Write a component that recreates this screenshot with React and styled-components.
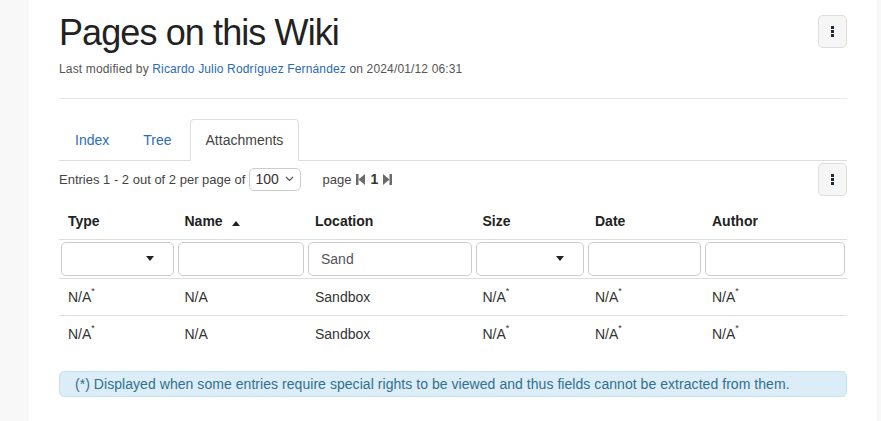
import React from 'react'
import styled, { createGlobalStyle } from 'styled-components'

const GlobalStyle = createGlobalStyle`
  body {
    margin: 0;
    background: #f8f8f8;
    font-family: 'Liberation Sans', Arial, sans-serif;
    color: #333;
  }
`

const Page = styled.div`
  display: flex;
  min-height: 421px;
`
const Main = styled.main`
  margin-left: 29px;
  width: 848px;
  box-sizing: border-box;
  padding: 0 30px;
  background: #fff;
`
const TitleRow = styled.div`
  display: flex;
  justify-content: space-between;
  align-items: flex-start;
`
const Title = styled.h1`
  margin: 13px 0 0;
  font-size: 36px;
  font-weight: normal;
  line-height: 1.1;
  letter-spacing: -0.9px;
  color: #222;
`
const KebabButton = styled.button`
  display: flex;
  flex-direction: column;
  align-items: center;
  justify-content: center;
  gap: 1px;
  width: 29px;
  height: 33px;
  margin-top: ${(p) => p.$top || 0}px;
  padding: 0;
  background: #f6f6f6;
  border: 1px solid #ddd;
  border-radius: 5px;
  flex-shrink: 0;
`
const Dot = styled.span`
  width: 3px;
  height: 3px;
  background: #1f2a38;
`
const Meta = styled.div`
  margin-top: 7px;
  font-size: 12px;
  line-height: 18px;
  letter-spacing: 0.15px;
  color: #555;
`
const Link = styled.a`
  color: #2a6ab4;
  text-decoration: none;
`
const Rule = styled.hr`
  margin: 20px 0;
  border: 0;
  border-top: 1px solid #e9e9e9;
`
const Tabs = styled.ul`
  display: flex;
  margin: 0;
  padding: 0;
  list-style: none;
  border-bottom: 1px solid #ddd;
`
const Tab = styled.li`
  margin: 0 2px -1px 0;
  padding: 10px 15px;
  font-size: 14px;
  line-height: 20px;
  border: 1px solid ${(p) => (p.$active ? '#ddd' : 'transparent')};
  border-bottom-color: transparent;
  border-radius: 4px 4px 0 0;
  background: ${(p) => (p.$active ? '#fff' : 'transparent')};
  color: ${(p) => (p.$active ? '#444' : '#2d6db3')};
`
const Toolbar = styled.div`
  display: flex;
  align-items: center;
  margin-top: 2px;
  font-size: 13px;
  color: #444;
`
const PerPage = styled.div`
  display: flex;
  align-items: center;
  justify-content: space-between;
  box-sizing: border-box;
  width: 52px;
  height: 23px;
  margin-left: 4px;
  padding: 0 6px 0 5px;
  font-size: 14px;
  color: #333;
  border: 1px solid #ccc;
  border-radius: 5px;
`
const Pager = styled.div`
  display: flex;
  align-items: center;
  gap: 5px;
  margin-left: 21px;
  flex: 1;
`
const PageNum = styled.b`
  font-size: 14px;
  color: #333;
`
const Table = styled.table`
  width: 788px;
  margin-top: 5px;
  border-collapse: collapse;
  table-layout: fixed;
  font-size: 14px;
`
const Th = styled.th`
  padding: 10px 8px 8px 9px;
  line-height: 20px;
  text-align: left;
  font-weight: bold;
  color: #222;
  border-bottom: 1px solid #ddd;
`
const FilterCell = styled.td`
  padding: 2px;
  border-bottom: 1px solid #ddd;
`
const FilterBox = styled.div`
  display: flex;
  align-items: center;
  justify-content: ${(p) => (p.$select ? 'flex-end' : 'flex-start')};
  box-sizing: border-box;
  height: 34px;
  padding: ${(p) => (p.$select ? '0 19px 0 12px' : '0 12px')};
  font-size: 14px;
  color: #555;
  border: 1px solid #ccc;
  border-radius: 5px;
`
const Td = styled.td`
  padding: 8px 8px 8px 9px;
  line-height: 20px;
  color: #333;
  border-bottom: ${(p) => (p.$last ? 'none' : '1px solid #ddd')};
`
const Star = styled.sup`
  position: relative;
  top: -2px;
  font-size: 9px;
  line-height: 0;
`
const Notice = styled.div`
  margin-top: 19px;
  padding: 2px 15px;
  font-size: 14px;
  line-height: 20px;
  letter-spacing: 0.05px;
  color: #31708f;
  background: #dcedf8;
  border: 1px solid #bfe3f1;
  border-radius: 5px;
`

const Caret = ({ up, ml = 0 }) => (
  <svg width="8" height="5" viewBox="0 0 8 5" style={{ marginLeft: ml }}>
    <path d={up ? 'M0 5 L4 0 L8 5 Z' : 'M0 0 L8 0 L4 5 Z'} fill="#222" />
  </svg>
)

const StepIcon = ({ next }) => (
  <svg width="9" height="11" viewBox="0 0 9 11">
    {next ? (
      <>
        <path d="M0 0 L6.5 5.5 L0 11 Z" fill="#6b6b6b" />
        <rect x="6.5" y="0" width="2.5" height="11" fill="#6b6b6b" />
      </>
    ) : (
      <>
        <rect x="0" y="0" width="2.5" height="11" fill="#6b6b6b" />
        <path d="M9 0 L2.5 5.5 L9 11 Z" fill="#6b6b6b" />
      </>
    )}
  </svg>
)

const Kebab = ({ top }) => (
  <KebabButton $top={top}>
    <Dot />
    <Dot />
    <Dot />
  </KebabButton>
)

const NA = () => (
  <>
    N/A<Star>*</Star>
  </>
)

const widths = [116.5, 130.5, 167.5, 112.5, 117, 144]
const rows = [1, 2]

export default function App() {
  return (
    <>
      <GlobalStyle />
      <Page>
        <Main>
          <TitleRow>
            <Title>Pages on this Wiki</Title>
            <Kebab top={15} />
          </TitleRow>
          <Meta>
            Last modified by <Link href="#">Ricardo Julio Rodríguez Fernández</Link> on
            2024/01/12 06:31
          </Meta>
          <Rule />
          <Tabs>
            <Tab>Index</Tab>
            <Tab>Tree</Tab>
            <Tab $active>Attachments</Tab>
          </Tabs>
          <Toolbar>
            Entries 1 - 2 out of 2 per page of
            <PerPage>
              100
              <svg width="9" height="6" viewBox="0 0 9 6">
                <path d="M1 1 L4.5 4.5 L8 1" stroke="#555" strokeWidth="1.2" fill="none" />
              </svg>
            </PerPage>
            <Pager>
              page
              <StepIcon />
              <PageNum>1</PageNum>
              <StepIcon next />
            </Pager>
            <Kebab />
          </Toolbar>
          <Table>
            <colgroup>
              {widths.map((w, i) => (
                <col key={i} style={{ width: w }} />
              ))}
            </colgroup>
            <thead>
              <tr>
                <Th>Type</Th>
                <Th>
                  Name
                  <Caret up ml={9} />
                </Th>
                <Th>Location</Th>
                <Th>Size</Th>
                <Th>Date</Th>
                <Th>Author</Th>
              </tr>
            </thead>
            <tbody>
              <tr>
                <FilterCell>
                  <FilterBox $select>
                    <Caret />
                  </FilterBox>
                </FilterCell>
                <FilterCell>
                  <FilterBox />
                </FilterCell>
                <FilterCell>
                  <FilterBox>Sand</FilterBox>
                </FilterCell>
                <FilterCell>
                  <FilterBox $select>
                    <Caret />
                  </FilterBox>
                </FilterCell>
                <FilterCell>
                  <FilterBox />
                </FilterCell>
                <FilterCell>
                  <FilterBox />
                </FilterCell>
              </tr>
              {rows.map((r, i) => {
                const last = i === rows.length - 1
                return (
                  <tr key={r}>
                    <Td $last={last}>
                      <NA />
                    </Td>
                    <Td $last={last}>N/A</Td>
                    <Td $last={last}>Sandbox</Td>
                    <Td $last={last}>
                      <NA />
                    </Td>
                    <Td $last={last}>
                      <NA />
                    </Td>
                    <Td $last={last}>
                      <NA />
                    </Td>
                  </tr>
                )
              })}
            </tbody>
          </Table>
          <Notice>
            (*) Displayed when some entries require special rights to be viewed and thus fields
            cannot be extracted from them.
          </Notice>
        </Main>
      </Page>
    </>
  )
}
